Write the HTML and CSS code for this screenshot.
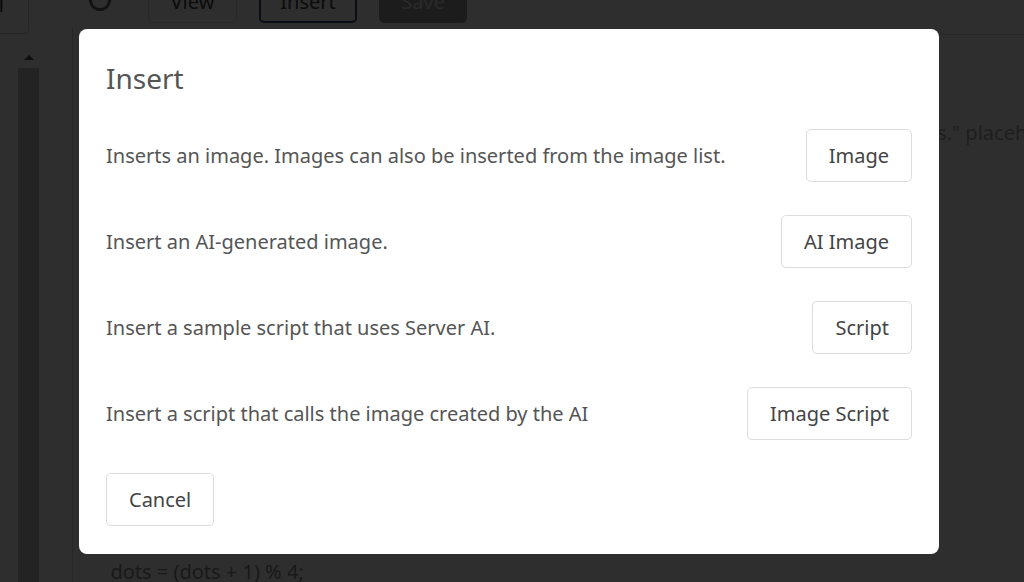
FILE: index.html
```
<!DOCTYPE html>
<html lang="en">
<head>
    <meta charset="UTF-8">
    <meta name="viewport" content="width=device-width, initial-scale=1.0">
    <title>Editor - Insert</title>
    <link rel="stylesheet" href="styles.css">
</head>
<body>
    <div class="page">
        <div class="toolbar">
            <div class="model-box">Model</div>
            <div class="reload">
                <svg width="26" height="26" viewBox="0 0 26 26">
                    <path d="M5 6 A9.5 9.5 0 1 0 21 6" fill="none" stroke="#666" stroke-width="3" stroke-linecap="round"/>
                </svg>
            </div>
            <button class="tool-btn view">View</button>
            <button class="tool-btn active">Insert</button>
            <button class="tool-btn save">Save</button>
        </div>

        <div class="workspace">
            <div class="side">
                <div class="side-list"></div>
                <div class="scrollbar">
                    <div class="scroll-arrow"></div>
                    <div class="scroll-track"></div>
                </div>
            </div>
            <div class="editor">
                <div class="editor-top"></div>
                <p class="placeholder">Write your page here, or ask the AI: "Make a page that shows a loading text with dots." placeholder</p>
                <pre class="code">let dots = 0;
const updateLoadingText = () =&gt; {
  dots = (dots + 1) % 4;
  loading.textContent = 'Loading' + '.'.repeat(dots);
};</pre>
            </div>
        </div>
    </div>

    <!-- Insert dialog -->
    <div class="overlay">
        <div class="modal">
            <h2>Insert</h2>

            <div class="row">
                <span>Inserts an image. Images can also be inserted from the image list.</span>
                <button class="btn">Image</button>
            </div>
            <div class="row">
                <span>Insert an AI-generated image.</span>
                <button class="btn">AI Image</button>
            </div>
            <div class="row">
                <span>Insert a sample script that uses Server AI.</span>
                <button class="btn">Script</button>
            </div>
            <div class="row">
                <span>Insert a script that calls the image created by the AI</span>
                <button class="btn">Image Script</button>
            </div>

            <div class="row">
                <button class="btn">Cancel</button>
            </div>
        </div>
    </div>
</body>
</html>
```

FILE: styles.css
```
body {
    margin: 0;
    height: 100vh;
    overflow: hidden;
    font-family: 'Noto Sans', 'Open Sans', sans-serif;
    background: #fff;
    color: #444;
}

.page {
    display: flex;
    flex-direction: column;
    height: 100vh;
}

.toolbar {
    height: 27px;
    display: flex;
    align-items: flex-end;
    flex-shrink: 0;
}

.model-box {
    width: 90px;
    height: 60px;
    margin-left: -61px;
    margin-bottom: -7px;
    border: 1px solid #ccc;
    border-radius: 5px;
    box-sizing: border-box;
    font-size: 20px;
    line-height: 60px;
    color: #333;
    text-align: right;
    padding-right: 24px;
}

.reload {
    width: 26px;
    height: 26px;
    margin-left: 58px;
    margin-bottom: 12px;
}

.tool-btn {
    height: 44px;
    width: 88px;
    margin-left: 22px;
    margin-bottom: 4px;
    border: 1px solid #ddd;
    border-radius: 5px;
    background: #fff;
    font-family: inherit;
    font-size: 20px;
    color: #444;
}

.tool-btn.view {
    width: 89px;
    margin-left: 35px;
}

.tool-btn.active {
    width: 98px;
    border: 2px solid #3a4a8c;
}

.tool-btn.save {
    border: none;
    background: #9a9a9a;
    color: #e8e8e8;
}

.workspace {
    flex: 1;
    display: flex;
    min-height: 0;
}

.side {
    width: 73px;
    display: flex;
    border-right: 1px solid #d6d6d6;
    box-sizing: border-box;
}

.side-list {
    width: 18px;
}

.scrollbar {
    width: 21px;
    display: flex;
    flex-direction: column;
    padding-top: 20px;
}

.scroll-arrow {
    height: 21px;
    display: flex;
    justify-content: center;
    align-items: center;
}

.scroll-arrow::before {
    content: '';
    border-left: 5px solid transparent;
    border-right: 5px solid transparent;
    border-bottom: 5px solid #505050;
}

.scroll-track {
    flex: 1;
    background: #c4c4c4;
}

.editor {
    flex: 1;
    min-width: 0;
    overflow: hidden;
}

.editor-top {
    height: 7px;
    border-bottom: 1px solid #d6d6d6;
}

.placeholder {
    margin: 84px 0 0 75px;
    font-size: 20px;
    white-space: nowrap;
    color: #a8a8a8;
}

.code {
    margin: 351px 0 0 27px;
    font-family: 'Noto Sans', 'Open Sans', sans-serif;
    font-size: 20px;
    line-height: 30px;
    color: #8c8c8c;
}

.overlay {
    position: fixed;
    top: 0;
    left: 0;
    width: 100%;
    height: 100%;
    background: rgba(0, 0, 0, 0.82);
    display: flex;
    justify-content: center;
    align-items: center;
    padding-right: 6px;
    box-sizing: border-box;
}

.modal {
    width: 860px;
    background: #fff;
    border-radius: 8px;
    padding: 32px 27px 28px;
    box-sizing: border-box;
    display: flex;
    flex-direction: column;
    gap: 33px;
}

.modal h2 {
    margin: 0 0 1px;
    font-size: 28px;
    font-weight: normal;
    line-height: 34px;
    color: #555;
}

.row {
    display: flex;
    justify-content: space-between;
    align-items: center;
    font-size: 20px;
    color: #555;
}

.btn {
    height: 53px;
    padding: 0 22px;
    border: 1px solid #ddd;
    border-radius: 5px;
    background: #fff;
    font-family: inherit;
    font-size: 20px;
    color: #444;
    cursor: pointer;
}
```
